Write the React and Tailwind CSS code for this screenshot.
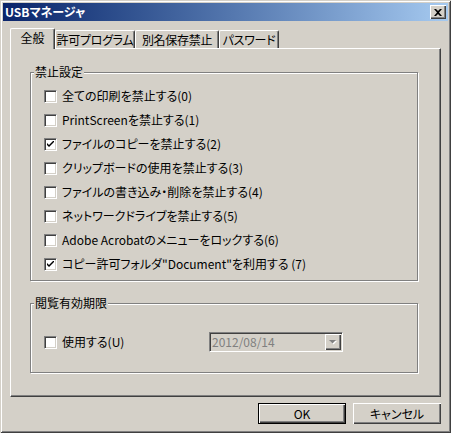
import React from "react";

const FONT = "[font-family:'Noto_Sans_CJK_JP','Noto_Sans',sans-serif]";

function Check({ checked }) {
  return (
    <span className="inline-flex w-[13px] h-[13px] shrink-0 items-center justify-center bg-white border border-t-[#808080] border-l-[#808080] border-b-white border-r-white shadow-[inset_1px_1px_#404040,inset_-1px_-1px_#d4d0c8]">
      {checked && (
        <svg width="7" height="7" viewBox="0 0 7 7" className="block">
          <path d="M0 2 L0 4 L2 6 L7 1 L7 -1 L2 4 Z" fill="#000" />
        </svg>
      )}
    </span>
  );
}

function Row({ checked, children }) {
  return (
    <div className="flex h-[24px] items-center gap-[5px]">
      <Check checked={checked} />
      <span className="whitespace-nowrap text-[12px] leading-none text-black">{children}</span>
    </div>
  );
}

function Group({ title, className, children }) {
  return (
    <div className={"relative w-[388px] border border-[#808080] shadow-[inset_1px_1px_#fff,1px_1px_#fff] " + className}>
      <span className="absolute left-[3px] top-[-8px] whitespace-nowrap bg-[#d4d0c8] px-[1px] text-[12px] leading-[14px] text-black">
        {title}
      </span>
      {children}
    </div>
  );
}

function Tab({ w, children }) {
  return (
    <div
      className={
        "flex h-[18px] items-center justify-center whitespace-nowrap rounded-t-[2px] border-l border-t border-r border-l-white border-t-white border-r-[#404040] shadow-[inset_-1px_0_#808080] tracking-[-0.3px] " +
        w
      }
    >
      {children}
    </div>
  );
}

export default function App() {
  const rows = [
    ["全ての印刷を禁止する(0)", false],
    ["PrintScreenを禁止する(1)", false],
    ["ファイルのコピーを禁止する(2)", true],
    ["クリップボードの使用を禁止する(3)", false],
    ["ファイルの書き込み・削除を禁止する(4)", false],
    ["ネットワークドライブを禁止する(5)", false],
    ["Adobe Acrobatのメニューをロックする(6)", false],
    ["コピー許可フォルダ\"Document\"を利用する (7)", true],
  ];
  return (
    <div
      className={
        "w-[451px] h-[433px] bg-[#d4d0c8] p-[3px] shadow-[inset_1px_1px_#d4d0c8,inset_-1px_-1px_#404040,inset_2px_2px_#fff,inset_-2px_-2px_#808080] [font-feature-settings:'palt'] " +
        FONT
      }
    >
      {/* Title bar */}
      <div className="flex h-[18px] items-center justify-between bg-gradient-to-r from-[#0a246a] to-[#a6caf0] pl-[2px] pr-[2px]">
        <span className="whitespace-nowrap text-[12px] font-bold leading-none text-white">USBマネージャ</span>
        <div className="flex h-[14px] w-[16px] items-center justify-center bg-[#d4d0c8] shadow-[inset_1px_1px_#fff,inset_-1px_-1px_#404040,inset_-2px_-2px_#808080]">
          <svg width="8" height="7" viewBox="0 0 8 7" className="block">
            <path d="M0 0 L2 0 L4 2 L6 0 L8 0 L5 3.5 L8 7 L6 7 L4 5 L2 7 L0 7 L3 3.5 Z" fill="#000" />
          </svg>
        </div>
      </div>

      {/* Body */}
      <div className="px-[7px] pt-[7px]">
        {/* Tabs */}
        <div className="flex h-[20px] items-end text-[12px] leading-none text-black">
          <div className="relative z-10 -mb-[1px] flex h-[21px] w-[45px] items-center justify-center whitespace-nowrap rounded-t-[2px] border-l border-t border-r border-l-white border-t-white border-r-[#404040] bg-[#d4d0c8] pb-[2px] shadow-[inset_-1px_0_#808080]">
            全般
          </div>
          <Tab w="w-[80px]">許可プログラム</Tab>
          <Tab w="w-[84px]">別名保存禁止</Tab>
          <Tab w="w-[60px]">パスワード</Tab>
        </div>

        {/* Panel */}
        <div className="h-[349px] w-[431px] border border-l-white border-t-white border-r-[#404040] border-b-[#404040] pl-[19px] pt-[23px] shadow-[inset_-1px_-1px_#808080]">
          <Group title="禁止設定" className="h-[209px] pl-[13px] pt-[11px]">
            {rows.map(([t, c]) => (
              <Row key={t} checked={c}>
                {t}
              </Row>
            ))}
          </Group>

          <Group title="閲覧有効期限" className="mt-[22px] h-[70px] pl-[13px] pt-[28px]">
            <div className="flex h-[20px] items-center">
              <div className="flex w-[165px] items-center gap-[5px]">
                <Check />
                <span className="whitespace-nowrap text-[12px] leading-none text-black">使用する(U)</span>
              </div>
              <div className="flex h-[20px] w-[134px] items-center justify-between border border-t-[#808080] border-l-[#808080] border-b-white border-r-white bg-[#d4d0c8] shadow-[inset_1px_1px_#404040,inset_-1px_-1px_#d4d0c8] pl-[2px] pr-[1px]">
                <span className="whitespace-nowrap text-[12px] leading-none text-[#808080]">2012/08/14</span>
                <div className="flex h-[16px] w-[16px] items-center justify-center bg-[#d4d0c8] shadow-[inset_1px_1px_#fff,inset_-1px_-1px_#404040,inset_-2px_-2px_#808080]">
                  <svg width="8" height="5" viewBox="0 0 8 5" className="block">
                    <path d="M1 1 L8 1 L4.5 4.5 Z" fill="#fff" />
                    <path d="M0 0 L7 0 L3.5 3.5 Z" fill="#808080" />
                  </svg>
                </div>
              </div>
            </div>
          </Group>
        </div>

        {/* Buttons */}
        <div className="mt-[6px] flex justify-end gap-[7px] text-[12px] leading-none text-black">
          <div className="flex h-[21px] w-[88px] items-center justify-center border border-black bg-[#d4d0c8] shadow-[inset_1px_1px_#fff,inset_-1px_-1px_#404040,inset_-2px_-2px_#808080]">
            OK
          </div>
          <div className="flex h-[21px] w-[88px] items-center justify-center whitespace-nowrap bg-[#d4d0c8] shadow-[inset_1px_1px_#fff,inset_-1px_-1px_#404040,inset_-2px_-2px_#808080]">
            キャンセル
          </div>
        </div>
      </div>
    </div>
  );
}
